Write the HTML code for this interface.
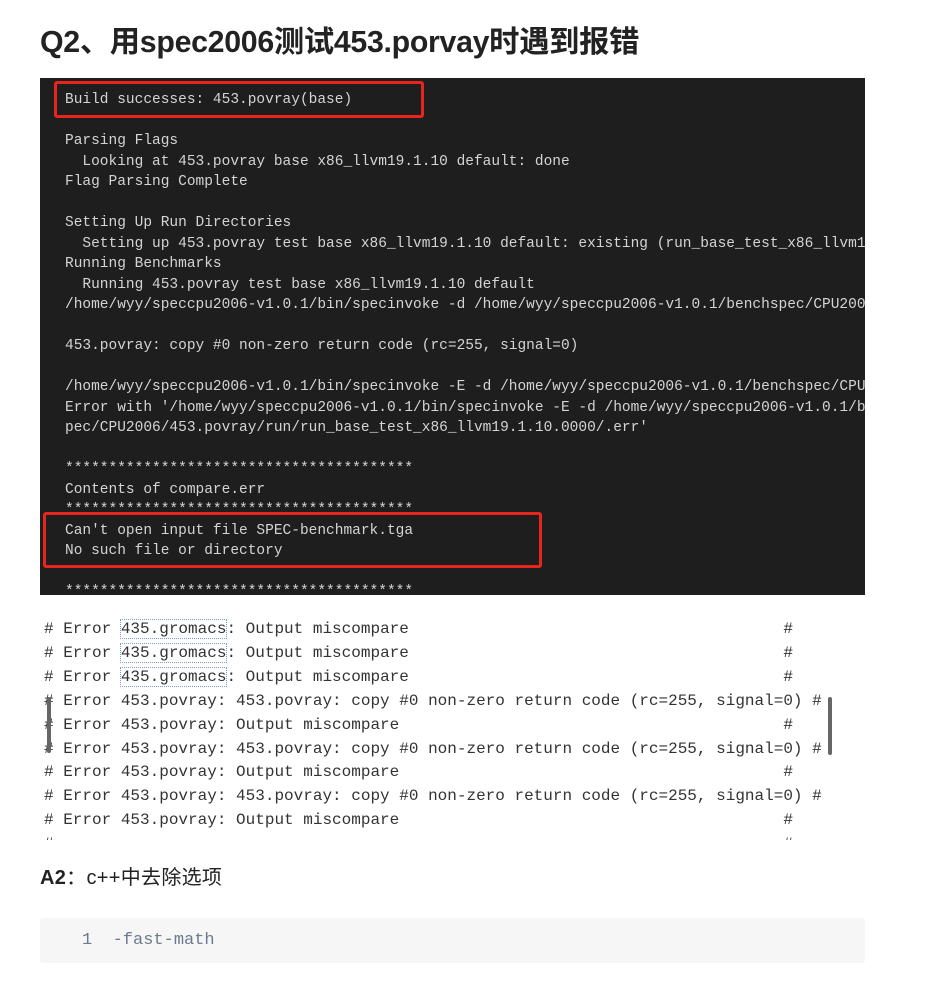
<!DOCTYPE html>
<html><head><meta charset="utf-8"><style>
body{margin:0;background:#fff;width:934px;height:987px;overflow:hidden;position:relative;font-family:"Liberation Sans","Noto Sans CJK SC",sans-serif}
.t{position:absolute;left:40px;top:17px;font-size:30.3px;font-weight:bold;color:#222;white-space:nowrap;letter-spacing:-0.3px}
.dark{position:absolute;left:40px;top:78px;width:825px;height:517px;background:#1e1e1e;overflow:hidden}
.dark pre{position:absolute;left:25px;top:12px;margin:0;font-family:"Liberation Mono",monospace;font-size:14.5px;line-height:20.5px;color:#d4d4d4;white-space:pre}
.box{position:absolute;border:3px solid #e8251d;border-radius:3px}
.lo{position:absolute;left:44px;top:618px;width:800px;height:222px;overflow:hidden}
.lo pre{margin:0;font-family:"Liberation Mono",monospace;font-size:16px;line-height:23.9px;color:#333;white-space:pre}
.hl{outline:1px dotted #7a9bd0}
.sb{position:absolute;width:4px;background:#666;border-radius:2px}
.a2{position:absolute;left:40px;top:861px;font-size:20px;color:#222;white-space:nowrap;letter-spacing:0.3px}
.code{position:absolute;left:40px;top:918px;width:825px;height:45px;background:#f6f6f6;border-radius:3px}
.code pre{margin:0;position:absolute;left:42px;top:13px;font-family:"Liberation Mono",monospace;font-size:17px;color:#6b7b8c}
</style></head><body>
<div class="t">Q2、用spec2006测试453.porvay时遇到报错</div>
<div class="dark"><pre>Build successes: 453.povray(base)

Parsing Flags
  Looking at 453.povray base x86_llvm19.1.10 default: done
Flag Parsing Complete

Setting Up Run Directories
  Setting up 453.povray test base x86_llvm19.1.10 default: existing (run_base_test_x86_llvm19.1.10.0000)
Running Benchmarks
  Running 453.povray test base x86_llvm19.1.10 default
/home/wyy/speccpu2006-v1.0.1/bin/specinvoke -d /home/wyy/speccpu2006-v1.0.1/benchspec/CPU2006/453.povray

453.povray: copy #0 non-zero return code (rc=255, signal=0)

/home/wyy/speccpu2006-v1.0.1/bin/specinvoke -E -d /home/wyy/speccpu2006-v1.0.1/benchspec/CPU2006/453
Error with '/home/wyy/speccpu2006-v1.0.1/bin/specinvoke -E -d /home/wyy/speccpu2006-v1.0.1/benchs
pec/CPU2006/453.povray/run/run_base_test_x86_llvm19.1.10.0000/.err'

****************************************
Contents of compare.err
****************************************
Can't open input file SPEC-benchmark.tga
No such file or directory

****************************************</pre>
<div class="box" style="left:14px;top:3px;width:364px;height:31px"></div>
<div class="box" style="left:3px;top:434px;width:493px;height:50px"></div>
</div>
<div class="lo"><pre># Error <span class="hl">435.gromacs</span>: Output miscompare                                       #
# Error <span class="hl">435.gromacs</span>: Output miscompare                                       #
# Error <span class="hl">435.gromacs</span>: Output miscompare                                       #
# Error 453.povray: 453.povray: copy #0 non-zero return code (rc=255, signal=0) #
# Error 453.povray: Output miscompare                                        #
# Error 453.povray: 453.povray: copy #0 non-zero return code (rc=255, signal=0) #
# Error 453.povray: Output miscompare                                        #
# Error 453.povray: 453.povray: copy #0 non-zero return code (rc=255, signal=0) #
# Error 453.povray: Output miscompare                                        #
#                                                                            #</pre></div>
<div class="sb" style="left:47px;top:697px;height:56px"></div>
<div class="sb" style="left:828px;top:697px;height:58px"></div>
<div class="a2"><b>A2</b>：c++中去除选项</div>
<div class="code"><pre>1  -fast-math</pre></div>
</body></html>
